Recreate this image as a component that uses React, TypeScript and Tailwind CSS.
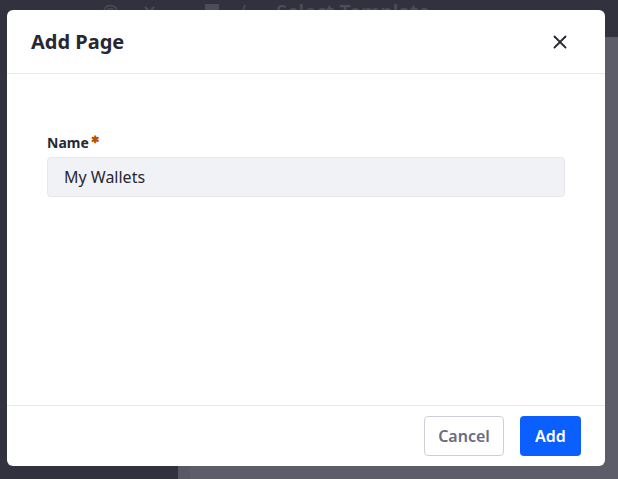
import { X } from "lucide-react";

const font = { fontFamily: '"Noto Sans", "Open Sans", sans-serif' };

export default function App() {
  return (
    <div className="relative h-[479px] w-[618px] overflow-hidden bg-[#32323f]" style={font}>
      {/* page behind the backdrop */}
      <div className="flex h-[37px] items-start pt-[2px] leading-none text-[#4d4d5a]">
        <span className="ml-[102px] text-[18px]">@</span>
        <span className="ml-[24px] text-[18px]">✕</span>
        <span className="ml-[48px] mt-[2px] inline-block h-[14px] w-[14px] bg-[#4d4d5a]" />
        <span className="ml-[20px] text-[18px]">/</span>
        <span className="ml-[30px] text-[20px] font-semibold">Select Template</span>
      </div>
      <div className="flex h-[442px]">
        <div className="w-[178px] bg-[#32323f]" />
        <div className="flex-1 border-l-[12px] border-[#595966] bg-[#5d5d69]" />
      </div>

      {/* modal */}
      <div className="absolute left-[7px] top-[10px] flex h-[456px] w-[598px] flex-col rounded-md bg-white">
        <div className="flex h-[64px] items-center justify-between border-b border-[#e7e7ed] pl-[24px] pr-[34px]">
          <h2 className="text-[20px] font-bold text-[#272833]">Add Page</h2>
          <X className="h-[22px] w-[22px] text-[#272833]" strokeWidth={2} />
        </div>
        <div className="flex-1 px-[40px] pt-[58px]">
          <label className="flex items-start text-[14px] font-bold text-[#272833]">
            Name<span className="ml-[2px] text-[10px] leading-[14px] text-[#b95000]">✱</span>
          </label>
          <div className="mt-[4px] flex h-[40px] w-[518px] items-center rounded-[4px] border border-[#e7e7ed] bg-[#f1f2f5] px-[16px] text-[16px] text-[#272833]">
            My Wallets
          </div>
        </div>
        <div className="flex h-[61px] items-center justify-end gap-[16px] border-t border-[#e7e7ed] pr-[24px]">
          <button className="h-[40px] w-[80px] rounded-[4px] border border-[#cdced9] bg-white text-[16px] font-semibold text-[#6b6c7e]">
            Cancel
          </button>
          <button className="h-[40px] w-[61px] rounded-[4px] bg-[#0b5fff] text-[16px] font-semibold text-white">
            Add
          </button>
        </div>
      </div>
    </div>
  );
}
